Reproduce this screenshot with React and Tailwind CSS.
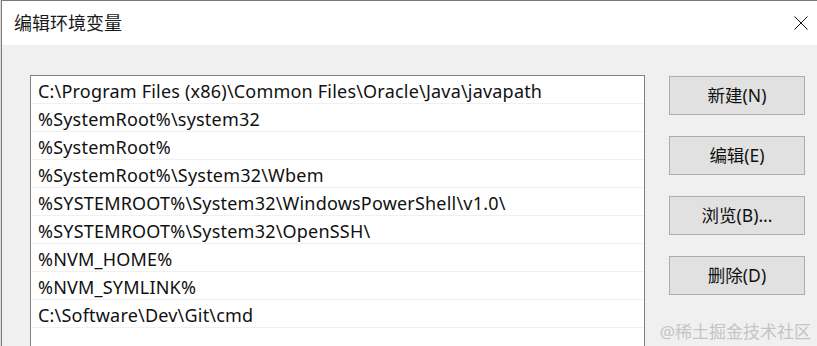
import React from "react";

const rows = [
  "C:\\Program Files (x86)\\Common Files\\Oracle\\Java\\javapath",
  "%SystemRoot%\\system32",
  "%SystemRoot%",
  "%SystemRoot%\\System32\\Wbem",
  "%SYSTEMROOT%\\System32\\WindowsPowerShell\\v1.0\\",
  "%SYSTEMROOT%\\System32\\OpenSSH\\",
  "%NVM_HOME%",
  "%NVM_SYMLINK%",
  "C:\\Software\\Dev\\Git\\cmd",
];

const buttons = ["新建(N)", "编辑(E)", "浏览(B)...", "删除(D)"];

const font = { fontFamily: '"Noto Sans", "Noto Sans CJK SC", sans-serif' };

export default function App() {
  return (
    <div
      className="relative w-[817px] h-[346px] overflow-hidden flex bg-white text-black"
      style={font}
    >
      <div className="w-[1px] h-full bg-[#dcdcdc]" />
      <div className="flex-1 flex flex-col border-l border-t border-[#7a7a7a]">
        <div className="h-[44px] bg-white flex items-center justify-between pl-[12px] pr-[9px]">
          <span className="text-[18px] leading-none text-[#1a1a1a]">编辑环境变量</span>
          <svg width="14" height="14" viewBox="0 0 14 14">
            <path d="M0.5 0.5 L13.5 13.5 M13.5 0.5 L0.5 13.5" stroke="#111" strokeWidth="1" />
          </svg>
        </div>
        <div className="flex-1 bg-[#f0f0f0] flex pl-[28px] pt-[30px]">
          <div className="w-[615px] bg-white border-l border-t border-r border-[#828282] flex flex-col">
            {rows.map((r) => (
              <div
                key={r}
                className="h-[28px] shrink-0 border-b border-[#f0f0f0] flex items-center pl-[7px] pt-[3px] text-[18px] tracking-[0.2px] text-[#111] whitespace-nowrap"
              >
                {r}
              </div>
            ))}
          </div>
          <div className="flex flex-col gap-[21px] pl-[24px] pt-[1px]">
            {buttons.map((b) => (
              <div
                key={b}
                className="w-[136px] h-[39px] bg-[#e1e1e1] border border-[#adadad] flex items-center justify-center text-[17.5px] text-[#111]"
              >
                {b}
              </div>
            ))}
          </div>
        </div>
      </div>
      <div className="absolute right-[6px] bottom-[6px] text-[17px] leading-none text-[#c4c4c4]">
        @稀土掘金技术社区
      </div>
    </div>
  );
}
